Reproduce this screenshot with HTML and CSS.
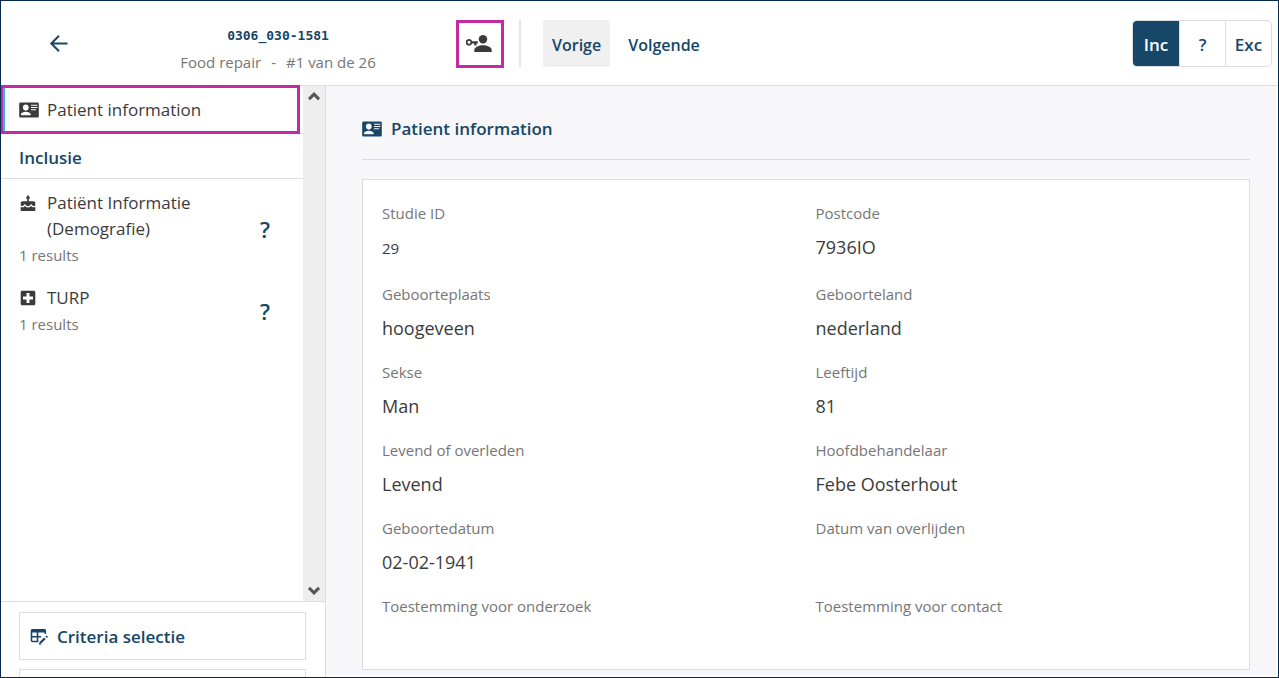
FILE: index.html
```html
<!DOCTYPE html>
<html lang="nl">
<head>
<meta charset="utf-8">
<meta name="viewport" content="width=device-width, initial-scale=1">
<title>Patient information</title>
<link rel="stylesheet" href="styles.css">
</head>
<body>
<svg class="sprite" aria-hidden="true">
  <symbol id="card" viewBox="0 0 20 16">
    <path fill-rule="evenodd" fill="currentColor" d="M1.5 0.500h17A1.300 1.300 0 0 1 19.800 1.800v12.400a1.300 1.300 0 0 1-1.300 1.300h-17A1.300 1.300 0 0 1 .2 14.200V1.800A1.300 1.300 0 0 1 1.500.5zM6.800 2.600c-1.700 0-2.900 1.200-2.900 3s1.200 3.100 2.900 3.100 2.900-1.300 2.900-3.100-1.200-3-2.900-3zM2 13.300h9.700v-.9c0-1.700-2.600-2.700-4.900-2.700s-4.800 1-4.800 2.700zM12 2.700v1h6.400v-1zm0 2.300v1h6.400V5zm0 2.300v1h5v-1z"/>
  </symbol>
  <symbol id="cake" viewBox="0 0 16 18">
    <path fill="currentColor" d="M8 0c1.200 1.500 1.700 2.100 1.700 2.900 0 .7-.4 1.200-.9 1.400v1.900h4.600c1.100 0 1.900.8 1.900 1.800v2.200c-.8 1.200-1.900 1.200-2.700.2l-1.500-1.400-1.400 1.400c-1 1-2.400 1-3.400 0L4.900 9l-1.500 1.400C2.500 11.300 1.400 11.300.7 10.100V8c0-1 .8-1.800 1.900-1.800h4.600V4.300c-.5-.2-.9-.7-.9-1.400C6.300 2.100 6.800 1.500 8 0zM.7 11.900c1.300.7 2.700.5 3.700-.5l.5-.5.6.5c1.400 1.400 3.600 1.400 5 0l.6-.5.5.5c1.100 1 2.400 1.200 3.700.5V16H.7z"/>
  </symbol>
  <symbol id="plus" viewBox="0 0 16 16">
    <path fill-rule="evenodd" fill="currentColor" d="M2.200.7h11.600c.9 0 1.500.6 1.500 1.500v11.600c0 .9-.6 1.500-1.500 1.500H2.200c-.9 0-1.500-.6-1.500-1.500V2.200C.7 1.300 1.300.7 2.200.7zM6.500 3v3.500H3v3h3.500V13h3V9.500H13v-3H9.500V3z"/>
  </symbol>
</svg>
<div class="app">
  <header class="topbar">
    <button class="back" type="button" aria-label="Terug">
      <svg width="20" height="20" viewBox="0 0 20 20" fill="none" stroke="currentColor" stroke-width="2"><path d="M18.500 9.500H2.500M10 1.800L2.300 9.500l7.700 7.700"/></svg>
    </button>
    <div class="record">
      <div class="record-id">0306_030-1581</div>
      <div class="record-meta"><span>Food repair</span><span>-</span><span>#1 van de 26</span></div>
    </div>
    <button class="key" type="button" aria-label="Patiëntgegevens">
      <svg width="28" height="20" viewBox="0 0 28 20" fill="currentColor"><circle cx="17" cy="5.300" r="4.200"/><path d="M8.300 18v-1.900c0-3 5-4.900 8.700-4.900s8.700 1.900 8.700 4.900V18z"/><path fill-rule="evenodd" d="M3 4.900a3.400 3.400 0 0 1 3.200 2.400h5.600v2.300h-1.300v2H8.300v-2H6.200A3.400 3.400 0 1 1 3 4.900zm0 1.900a1.500 1.500 0 1 0 0 3 1.500 1.500 0 0 0 0-3z"/></svg>
    </button>
    <nav class="pager" aria-label="Navigatie">
      <button class="page active" type="button">Vorige</button>
      <button class="page" type="button">Volgende</button>
    </nav>
    <div class="verdict" role="group" aria-label="Beoordeling">
      <button class="choice chosen" type="button">Inc</button>
      <button class="choice" type="button">?</button>
      <button class="choice" type="button">Exc</button>
    </div>
  </header>
  <div class="body">
    <aside class="sidebar">
      <div class="scroller">
        <nav class="list" aria-label="Onderdelen">
          <a class="current" href="#patient"><svg class="icon-card"><use href="#card"/></svg>Patient information</a>
          <h2 class="group">Inclusie</h2>
          <a class="entry" href="#demografie">
            <span class="entry-text">
              <span class="entry-title"><svg class="icon-cake"><use href="#cake"/></svg><span>Patiënt Informatie (Demografie)</span></span>
              <span class="results">1 results</span>
            </span>
            <span class="status">?</span>
          </a>
          <a class="entry" href="#turp">
            <span class="entry-text">
              <span class="entry-title"><svg class="icon-plus"><use href="#plus"/></svg><span>TURP</span></span>
              <span class="results">1 results</span>
            </span>
            <span class="status">?</span>
          </a>
        </nav>
        <div class="track">
          <button type="button" aria-label="Omhoog"><svg width="12" height="9" viewBox="0 0 12 9" fill="none" stroke="currentColor" stroke-width="3"><path d="M1 7.200l5-5 5 5"/></svg></button>
          <button type="button" aria-label="Omlaag"><svg width="12" height="9" viewBox="0 0 12 9" fill="none" stroke="currentColor" stroke-width="3"><path d="M1 1.800l5 5 5-5"/></svg></button>
        </div>
      </div>
      <div class="actions">
        <button class="action" type="button">
          <svg width="18" height="18" viewBox="0 0 18 18" fill="none" stroke="currentColor"><path stroke-width="1.600" d="M15.300 6V2.800c0-.7-.4-1-1-1H2.500c-.6 0-1 .3-1 1v9.700c0 .6.4 1 1 1H8.500M1.500 8.700H11M7.500 4v9.500"/><path stroke-width="3" d="M1.500 3h14"/><path stroke-width="2.200" d="M10.200 15l4.700-4.700"/><path fill="currentColor" stroke="none" d="M9 16.800l.4-2.600 2.200 2.200zM15.400 8.400l1.200-1 1.400 1.400-1 1.200z"/></svg>
          Criteria selectie
        </button>
        <button class="action" type="button" aria-label="Meer"></button>
      </div>
    </aside>
    <main class="content" id="patient">
      <h1 class="heading"><svg class="icon-card"><use href="#card"/></svg>Patient information</h1>
      <dl class="fields">
        <div class="field"><dt>Studie ID</dt><dd class="study-id">29</dd></div>
        <div class="field"><dt>Postcode</dt><dd>7936IO</dd></div>
        <div class="field"><dt>Geboorteplaats</dt><dd>hoogeveen</dd></div>
        <div class="field"><dt>Geboorteland</dt><dd>nederland</dd></div>
        <div class="field"><dt>Sekse</dt><dd>Man</dd></div>
        <div class="field"><dt>Leeftijd</dt><dd>81</dd></div>
        <div class="field"><dt>Levend of overleden</dt><dd>Levend</dd></div>
        <div class="field"><dt>Hoofdbehandelaar</dt><dd>Febe Oosterhout</dd></div>
        <div class="field"><dt>Geboortedatum</dt><dd>02-02-1941</dd></div>
        <div class="field"><dt>Datum van overlijden</dt><dd></dd></div>
        <div class="field"><dt>Toestemming voor onderzoek</dt><dd></dd></div>
        <div class="field"><dt>Toestemming voor contact</dt><dd></dd></div>
      </dl>
    </main>
  </div>
</div>
</body>
</html>
```
FILE: styles.css
```css
:root {
  --navy: #164668;
  --ink: #3b3b3b;
  --muted: #767676;
  --line: #dcdce2;
  --mark: #c32aa3;
}

* { box-sizing: border-box; }

body {
  margin: 0;
  color: var(--ink);
  font: 17px/26px "Open Sans", "Noto Sans", sans-serif;
}

button {
  margin: 0;
  padding: 0;
  border: 0;
  background: none;
  color: var(--navy);
  font: inherit;
}

a { color: inherit; text-decoration: none; }
svg { display: block; flex: none; }
.sprite { position: absolute; width: 0; height: 0; }

.app {
  display: flex;
  flex-direction: column;
  height: 100vh;
  overflow: hidden;
  border: 1px solid #05294a;
  background: #fff;
}

.topbar {
  display: flex;
  flex: none;
  align-items: flex-start;
  padding: 19px 6px 11px 48px;
  border-bottom: 1px solid var(--line);
}

.back { display: flex; align-items: center; height: 48px; }

.record { flex: 0 0 260px; margin: 0 48px 0 79px; padding-top: 4px; text-align: center; }
.record-id {
  margin-bottom: 2px;
  color: var(--navy);
  font: bold 13px/24px "DejaVu Sans Mono", monospace;
}
.record-meta {
  display: flex;
  justify-content: center;
  gap: 10px;
  color: var(--muted);
  font-size: 15px;
  line-height: 24px;
}

.key {
  display: flex;
  align-items: center;
  justify-content: center;
  width: 48px;
  height: 48px;
  border: 3px solid var(--mark);
  color: var(--ink);
}

.pager {
  display: flex;
  gap: 9px;
  margin-left: 15px;
  padding-left: 22px;
  border-left: 2px solid #e6e6ea;
}
.page {
  padding: 12px 9px 9px;
  border-radius: 2px;
  font-size: 16px;
  font-weight: 600;
}
.page.active { background: #f0f0f0; }

.verdict {
  display: flex;
  margin-left: auto;
  overflow: hidden;
  border: 1px solid var(--line);
  border-radius: 5px;
}
.choice { width: 46px; padding: 11px 0 8px; font-weight: 600; }
.choice + .choice { border-left: 1px solid var(--line); }
.choice.chosen { background: var(--navy); color: #fff; }

.body { display: flex; flex: 1; min-height: 0; }

.sidebar {
  display: flex;
  flex: 0 0 325px;
  flex-direction: column;
  border-right: 1px solid var(--line);
}
.scroller { display: flex; flex: 1; min-height: 0; }
.list { flex: 1; }

.current {
  position: relative;
  display: flex;
  align-items: center;
  gap: 8px;
  padding: 11px 18px 10px;
  border-bottom: 1px solid var(--line);
}
.current::before {
  content: "";
  position: absolute;
  inset: -1px 3px -1px -1px;
  border: 3px solid var(--mark);
  box-shadow: inset 2px 0 #33b7ee;
}

.icon-card { width: 20px; height: 16px; }
.icon-cake { width: 18px; height: 18px; }
.icon-plus { width: 18px; height: 16px; }

.group {
  margin: 0;
  padding: 11px 18px 7px;
  border-bottom: 1px solid var(--line);
  color: var(--navy);
  font-size: 17px;
  font-weight: 600;
}

.entry {
  display: flex;
  align-items: center;
  padding: 11px 33px 6px 18px;
}
.entry-text { flex: 1; }
.entry-title { display: flex; gap: 10px; }
.entry-title svg { margin-top: 5px; }
.entry-title > span { max-width: 170px; }
.results { display: block; color: var(--muted); font-size: 15px; }
.status { color: var(--navy); font-size: 22px; font-weight: 600; }

.track {
  display: flex;
  flex: 0 0 22px;
  flex-direction: column;
  justify-content: space-between;
  align-items: center;
  padding: 6px 0;
  background: #eee;
}
.track button { color: #555; }

.actions {
  display: flex;
  flex: 0 0 76px;
  flex-direction: column;
  gap: 9px;
  overflow: hidden;
  padding: 10px 19px 0 18px;
  border-top: 1px solid var(--line);
}
.action {
  display: flex;
  flex: none;
  align-items: center;
  gap: 9px;
  height: 48px;
  padding: 2px 10px 0;
  border: 1px solid var(--line);
  font-weight: 600;
}

.content {
  flex: 1;
  min-width: 0;
  overflow: hidden;
  margin: 0 2px 2px 0;
  padding: 0 26px 0 36px;
  background: #f7f7fa;
}
.heading {
  display: flex;
  align-items: center;
  gap: 9px;
  margin: 0 0 19px;
  padding: 30px 0 17px;
  border-bottom: 1px solid var(--line);
  color: var(--navy);
  font-size: 17px;
  font-weight: 600;
}

.fields {
  display: grid;
  grid-template-columns: 1fr 1fr;
  row-gap: 18px;
  margin: 0;
  padding: 21px 0 15px 19px;
  border: 1px solid var(--line);
  background: #fff;
}
.field dt { margin-bottom: 8px; color: var(--muted); font-size: 15px; line-height: 24px; }
.field dd { min-height: 28px; margin: 0; font-size: 18px; line-height: 28px; }
.field .study-id { font-size: 15px; line-height: 31px; }
```
